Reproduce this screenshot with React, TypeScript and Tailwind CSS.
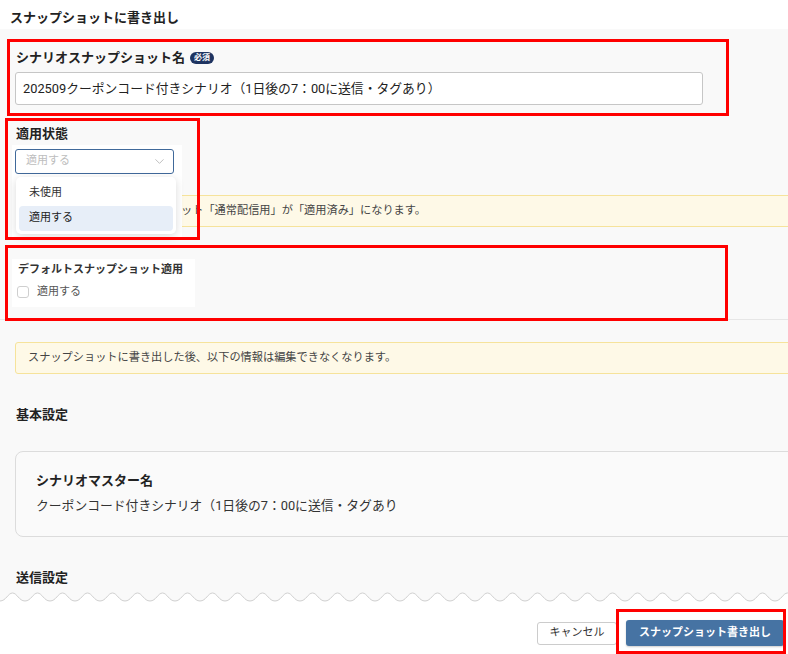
import { ChevronDown } from "lucide-react";

const Wave = () => {
  // torn-paper edge between the scrolled body and the footer
  const period = 25;
  const count = Math.ceil(788 / period) + 1;
  let d = "M0 9";
  for (let i = 0; i < count; i++) {
    const x = i * period;
    d += ` C${x + 6} 9 ${x + 8} 1 ${x + 12.5} 1 C${x + 17} 1 ${x + 19} 9 ${x + 25} 9`;
  }
  return (
    <svg width="788" height="12" viewBox="0 0 788 12" className="block">
      <path d={`${d} L800 0 L0 0 Z`} fill="#f9f9f9" />
      <path d={d} fill="none" stroke="#cfcfcf" strokeWidth="1" />
    </svg>
  );
};

const RedBox = ({ className }: { className: string }) => (
  <div className={`absolute border-[3px] border-[#ff0000] pointer-events-none ${className}`} />
);

export default function App() {
  return (
    <div className="relative w-[788px] h-[654px] overflow-hidden bg-white text-[#222] font-[Roboto,'Noto_Sans_CJK_JP',sans-serif]">
      {/* Header */}
      <div className="h-[29px] bg-white px-[10px] pt-[9px]">
        <h2 className="text-[13px] leading-[18px] font-bold text-[#222]">スナップショットに書き出し</h2>
      </div>

      {/* Body */}
      <div className="h-[563px] bg-[#f9f9f9] px-[15px] overflow-hidden">
        {/* シナリオスナップショット名 */}
        <div className="pt-[20px]">
          <div className="flex items-center gap-[5px] ml-[1px]">
            <span className="text-[13px] leading-[18px] font-bold">シナリオスナップショット名</span>
            <span className="h-[12px] px-[4px] rounded-full bg-[#1e3461] text-white text-[8px] leading-[12px] font-bold">必須</span>
          </div>
          <div className="mt-[5px] h-[33px] w-[688px] bg-white border border-[#c6c6c6] rounded-[3px] flex items-center px-[7px] text-[12.8px]">
            202509クーポンコード付きシナリオ（1日後の7：00に送信・タグあり）
          </div>
        </div>

        {/* 適用状態 */}
        <div className="mt-[20px] ml-[1px] text-[13px] leading-[18px] font-bold">適用状態</div>
        <div className="relative z-10 mt-[2px] -ml-[3px] w-[170px] bg-white pt-[4px] pl-[3px]">
          <div className="h-[25px] w-[159px] border-[1.5px] border-[#40699a] rounded-[3px] bg-white flex items-center justify-between pl-[10px] pr-[6px]">
            <span className="text-[11px] text-[#bdbdbd]">適用する</span>
            <ChevronDown size={15} strokeWidth={1.3} className="text-[#b0b0b0]" />
          </div>
          <div className="absolute left-0 top-full w-[170px] h-[64px] bg-white">
            <div className="mt-[3px] ml-[4px] w-[160px] h-[57px] rounded-[5px] bg-white shadow-[0_2px_8px_rgba(0,0,0,0.15)] p-[3px]">
              <div className="h-[26px] flex items-center pl-[10px] text-[11px] text-[#333]">未使用</div>
              <div className="h-[25px] flex items-center pl-[10px] text-[11px] text-[#222] bg-[#e7eef8] rounded-[4px]">適用する</div>
            </div>
          </div>
        </div>

        <div className="mt-[21px] h-[32px] w-[800px] bg-[#fef9e7] border border-[#f6e39b] rounded-[3px] flex items-center pl-[165px] text-[11.2px] text-[#444] whitespace-nowrap">
          ット「通常配信用」が「適用済み」になります。
        </div>

        {/* デフォルトスナップショット適用 */}
        <div className="mt-[32px] -ml-[3px] w-[183px] h-[48px] bg-white pl-[5px] pt-[3px]">
          <div className="ml-[1px] text-[11px] leading-[16px] font-bold text-[#333]">デフォルトスナップショット適用</div>
          <label className="mt-[6px] h-[16px] flex items-center gap-[8px]">
            <span className="w-[12px] h-[12px] rounded-[3px] border border-[#cfcfcf] bg-white" />
            <span className="text-[11px] text-[#555]">適用する</span>
          </label>
        </div>

        <div className="mt-[12px] -mx-[15px] border-t border-[#e6e6e6]" />

        <div className="mt-[22px] h-[32px] w-[800px] bg-[#fef9e7] border border-[#f6e39b] rounded-[3px] flex items-center pl-[12px] text-[11.2px] text-[#444]">
          スナップショットに書き出した後、以下の情報は編集できなくなります。
        </div>

        <h3 className="mt-[32px] ml-[1px] text-[13px] leading-[18px] font-bold">基本設定</h3>

        <div className="mt-[27px] h-[86px] w-[800px] border border-[#dcdcdc] rounded-[8px] bg-[#fafafa] pl-[20px] pt-[20px]">
          <div className="text-[13px] leading-[18px] font-bold">シナリオマスター名</div>
          <div className="mt-[7px] text-[12.8px] leading-[18px] text-[#333]">クーポンコード付きシナリオ（1日後の7：00に送信・タグあり</div>
        </div>

        <h3 className="mt-[32px] ml-[1px] text-[13px] leading-[18px] font-bold">送信設定</h3>
      </div>

      <Wave />

      {/* Footer */}
      <div className="flex justify-end items-center gap-[9px] pr-[4px] pt-[16px]">
        <button className="h-[23px] w-[80px] bg-white border border-[#cccccc] rounded-[3px] text-[11px] text-[#333]">
          キャンセル
        </button>
        <button className="h-[26px] w-[158px] bg-[#4673a3] rounded-[3px] text-[11px] font-bold text-white shadow-[0_1px_2px_rgba(0,0,0,0.2)]">
          スナップショット書き出し
        </button>
      </div>

      {/* annotation boxes */}
      <RedBox className="left-[7px] top-[39px] w-[722px] h-[77px]" />
      <RedBox className="left-[5px] top-[118px] w-[195px] h-[122px] z-20" />
      <RedBox className="left-[5px] top-[245px] w-[723px] h-[76px]" />
      <RedBox className="left-[616px] top-[609px] w-[170px] h-[45px]" />
    </div>
  );
}
